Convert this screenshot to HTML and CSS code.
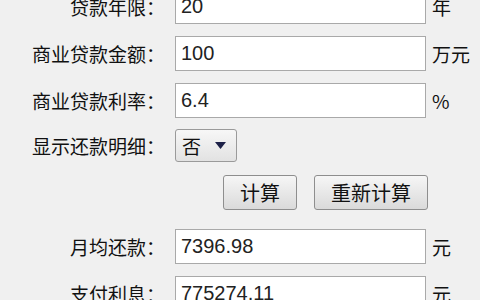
FILE: index.html
```html
<!DOCTYPE html>
<html>
<head>
  <title>房贷计算器</title>
  <link rel="stylesheet" href="styles.css">
</head>
<body>

  <div class="calc-form">
    <div class="form-row">
      <label class="field-label">贷款年限：</label>
      <div class="field-box">20</div>
      <span class="unit">年</span>
    </div>

    <div class="form-row">
      <label class="field-label">商业贷款金额：</label>
      <div class="field-box">100</div>
      <span class="unit">万元</span>
    </div>

    <div class="form-row">
      <label class="field-label">商业贷款利率：</label>
      <div class="field-box">6.4</div>
      <span class="unit">%</span>
    </div>

    <div class="form-row select-row">
      <label class="field-label">显示还款明细：</label>
      <div class="select-box">
        <span>否</span>
        <svg class="arrow" width="11" height="7" viewBox="0 0 11 7">
          <path d="M0 0 L11 0 L5.5 7 Z" fill="#1d2148"/>
        </svg>
      </div>
    </div>

    <div class="button-row">
      <button class="btn">计算</button>
      <button class="btn">重新计算</button>
    </div>

    <div class="form-row">
      <label class="field-label">月均还款：</label>
      <div class="field-box">7396.98</div>
      <span class="unit">元</span>
    </div>

    <div class="form-row">
      <label class="field-label">支付利息：</label>
      <div class="field-box">775274.11</div>
      <span class="unit">元</span>
    </div>
  </div>

</body>
</html>
```

FILE: styles.css
```css
body {
  margin: 0;
  background-color: #f0f0f0;
  font-family: "Noto Sans CJK SC", "Liberation Sans", sans-serif;
  color: #111;
  overflow: hidden;
}

.calc-form {
  margin-top: -11px;
}

.form-row {
  display: flex;
  align-items: center;
  height: 35px;
  margin-bottom: 12px;
}

.field-label {
  width: 165px;
  text-align: right;
  font-size: 19px;
  line-height: 35px;
  white-space: nowrap;
}

.field-box {
  box-sizing: border-box;
  width: 251px;
  height: 35px;
  margin-left: 10px;
  padding-left: 5px;
  background-color: #fff;
  border: 1px solid #a9a9a9;
  font-family: "Liberation Sans", Arial, sans-serif;
  font-size: 20px;
  line-height: 33px;
  color: #222;
}

.unit {
  margin-left: 6px;
  font-size: 19px;
}

.select-row {
  height: 33px;
  margin-top: -1px;
  margin-bottom: 13px;
}

.select-box {
  box-sizing: border-box;
  display: flex;
  align-items: center;
  width: 62px;
  height: 33px;
  margin-left: 10px;
  padding-left: 6px;
  border: 1px solid #9a9a9a;
  border-radius: 3px;
  background: linear-gradient(#f7f7f7, #e2e2e2);
  font-size: 19px;
}

.arrow {
  margin-left: 14px;
}

.button-row {
  display: flex;
  gap: 17px;
  padding-left: 223px;
  margin-bottom: 19px;
}

.btn {
  box-sizing: border-box;
  height: 35px;
  padding: 0 16px;
  border: 1px solid #8e8e8e;
  border-radius: 3px;
  background: linear-gradient(#f6f6f6, #dadada);
  font-family: "Noto Sans CJK SC", sans-serif;
  font-size: 20px;
  color: #111;
}
```
